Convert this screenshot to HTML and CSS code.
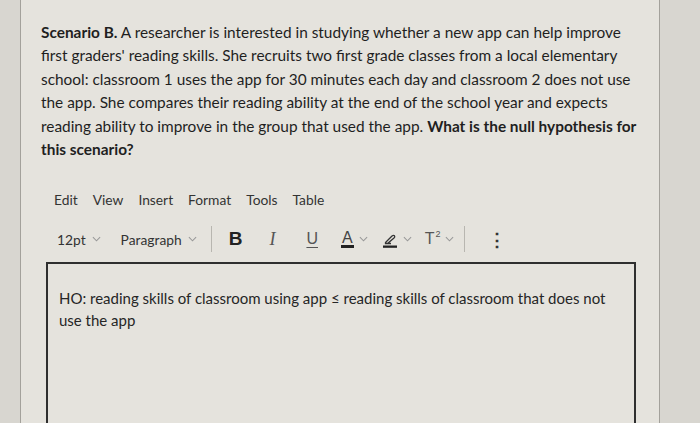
FILE: index.html
```html
<!DOCTYPE html>
<html>
<head>
<meta charset="utf-8">
<link rel="stylesheet" href="styles.css">
</head>
<body>
<div class="page">
  <div class="card">
    <p class="question"><b>Scenario B.</b> A researcher is interested in studying whether a new app can help improve first graders' reading skills. She recruits two first grade classes from a local elementary school: classroom 1 uses the app for 30 minutes each day and classroom 2 does not use the app. She compares their reading ability at the end of the school year and expects reading ability to improve in the group that used the app. <b>What is the null hypothesis for this scenario?</b></p>

    <div class="menubar">
      <span>Edit</span><span>View</span><span>Insert</span><span>Format</span><span>Tools</span><span>Table</span>
    </div>

    <div class="toolbar">
      <span class="drop">12pt <svg class="chev" viewBox="0 0 10 6"><path d="M1 1l4 4 4-4"/></svg></span>
      <span class="drop para">Paragraph <svg class="chev" viewBox="0 0 10 6"><path d="M1 1l4 4 4-4"/></svg></span>
      <span class="sep"></span>
      <span class="btn bold">B</span>
      <span class="btn ital">I</span>
      <span class="btn under">U</span>
      <span class="btn acol"><span class="alet">A</span><svg class="chev" viewBox="0 0 10 6"><path d="M1 1l4 4 4-4"/></svg></span>
      <span class="btn pcol"><svg class="pen" viewBox="0 0 16 17"><path d="M3.5 11.5 L10 5 Q11.5 3.8 12.5 4.8 Q13.3 5.8 12 7 L5.5 12.5 L3.5 12.5 Z M3.5 12.5 L9 12.5" fill="none" stroke="#333" stroke-width="1.3"/><rect x="1" y="14.5" width="14" height="2.3" fill="#222"/></svg><svg class="chev" viewBox="0 0 10 6"><path d="M1 1l4 4 4-4"/></svg></span>
      <span class="btn sup"><span class="tt">T<span class="two">2</span></span><svg class="chev" viewBox="0 0 10 6"><path d="M1 1l4 4 4-4"/></svg></span>
      <span class="sep sep2"></span>
      <span class="btn more">&#8942;</span>
    </div>

    <div class="editor">
      <p>HO: reading skills of classroom using app &le; reading skills of classroom that does not use the app</p>
    </div>
  </div>
</div>
</body>
</html>
```

FILE: styles.css
```css
html, body {
  margin: 0;
  padding: 0;
  background: #d8d6d0;
  height: 100%;
  overflow: hidden;
}
.page {
  width: 700px;
  height: 423px;
  overflow: hidden;
  font-family: Lato, "Open Sans", sans-serif;
  color: #262626;
}
.card {
  margin-left: 20px;
  width: 640px;
  height: 423px;
  box-sizing: border-box;
  background: #e5e3dd;
  border-left: 1px solid #a3a19b;
  border-right: 1px solid #a3a19b;
  padding: 21px 0 0 20px;
  overflow: hidden;
}
.question {
  margin: 0;
  width: 600px;
  font-size: 15.4px;
  line-height: 23.4px;
  color: #1f1f1f;
}
.question b { font-weight: 700; }
.menubar {
  display: flex;
  gap: 15px;
  margin: 29px 0 0 13px;
  font-size: 13.8px;
  line-height: 20px;
  color: #333;
}
.toolbar {
  display: flex;
  align-items: center;
  margin: 18px 0 0 16px;
  height: 22px;
  font-size: 13.8px;
  color: #333;
}
.drop {
  display: flex;
  align-items: center;
  gap: 6px;
}
.para { margin-left: 20px; }
.chev {
  width: 9px;
  height: 6px;
  fill: none;
  stroke: #999;
  stroke-width: 1.2;
}
.sep {
  width: 1px;
  height: 26px;
  background: #b8b6b0;
  margin: 0 0 0 14px;
}
.btn {
  display: flex;
  align-items: center;
  gap: 5px;
}
.bold {
  margin-left: 17px;
  font-family: "Liberation Sans", Arial, sans-serif;
  font-weight: 700;
  font-size: 19px;
  color: #222;
}
.ital {
  margin-left: 27px;
  font-family: "Liberation Serif", serif;
  font-style: italic;
  font-size: 18px;
  color: #555;
}
.under {
  margin-left: 31px;
  font-family: "Liberation Sans", Arial, sans-serif;
  font-size: 16px;
  text-decoration: underline;
  text-underline-offset: 3px;
  color: #555;
}
.acol { margin-left: 23px; }
.pcol { margin-left: 14px; }
.alet {
  font-family: "Liberation Sans", Arial, sans-serif;
  font-size: 16px;
  color: #444;
  border-bottom: 3px solid #222;
  line-height: 15px;
  padding: 0 1px;
}
.pen {
  width: 16px;
  height: 17px;
}
.sup {
  margin-left: 13px;
  font-family: "Liberation Sans", Arial, sans-serif;
  font-size: 16px;
  color: #555;
}
.tt { line-height: 16px; }
.two {
  font-size: 9px;
  vertical-align: 7px;
  margin-left: 1px;
  line-height: 0;
}
.sep2 { margin-left: 10px; }
.more {
  margin-left: 23px;
  font-size: 18px;
  font-weight: 700;
  color: #333;
}
.editor {
  margin: 12px 0 0 5px;
  width: 590px;
  height: 200px;
  box-sizing: border-box;
  border: 2px solid #2f2f2f;
  padding: 23px 0 0 11px;
}
.editor p {
  margin: 0;
  width: 560px;
  font-size: 15px;
  line-height: 22px;
  color: #262626;
}
```
